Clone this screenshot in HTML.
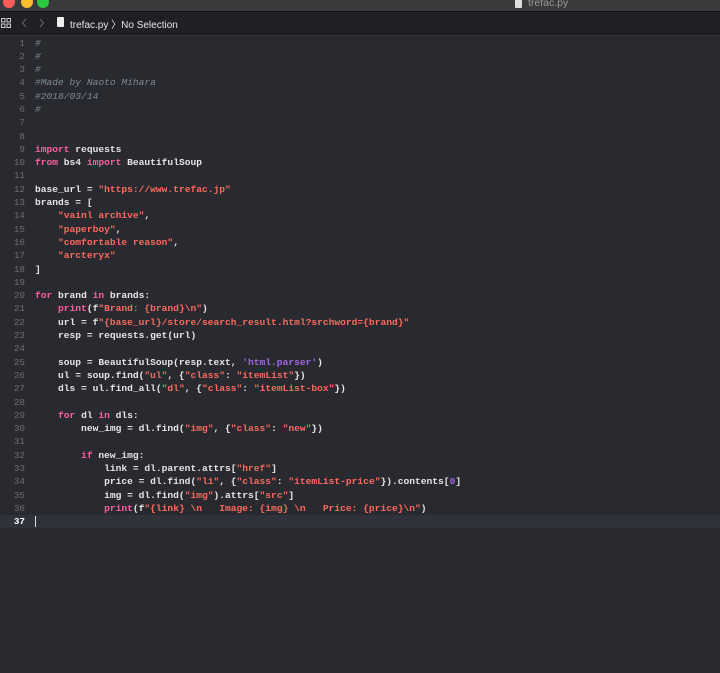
<!DOCTYPE html>
<html><head><meta charset="utf-8"><style>
*{margin:0;padding:0;box-sizing:border-box}
body{width:720px;height:673px;background:#292a30;overflow:hidden;position:relative;font-family:"Liberation Sans",sans-serif}
#title{position:absolute;left:0;top:0;width:720px;height:12px;background:#3a3a3c;border-bottom:1px solid #111}
.tl{position:absolute;top:-4px;width:12px;height:12px;border-radius:50%}
#jump{position:absolute;left:0;top:12px;width:720px;height:22px;background:#1f2023;border-bottom:1px solid #141416;color:#e6e6e6;font-size:9.5px}
#code{position:absolute;left:0;top:36.5px;width:720px;font-family:"Liberation Mono",monospace;font-size:9.6px;color:#e6e6e8;font-weight:bold}
.l{height:13.3px;line-height:13.3px;white-space:pre;position:relative}
.n{position:absolute;left:0;width:25px;text-align:right;color:#6e6e73;font-size:9.3px;font-weight:normal}
.c{position:absolute;left:35px}
.k{color:#fc5fa3}.s{color:#fc6a5d}.m{color:#7d8a97;font-style:italic;font-weight:normal}.p{color:#a167e6}
.cur{background:#2f323a}
.cur .n{color:#fff;font-weight:bold}
</style></head><body>
<div id="title">
<div class="tl" style="left:3px;background:#fc5f57"></div>
<div class="tl" style="left:21px;background:#fdbc2e"></div>
<div class="tl" style="left:37px;background:#28c840"></div>
<div style="position:absolute;left:515px;top:-1px;width:7px;height:9px;background:#ddd;border-radius:1px"></div>
<div style="position:absolute;left:528px;top:-3px;color:#9a9a9c;font-size:10.5px">trefac.py</div>
</div>
<div id="jump">
<svg style="position:absolute;left:1px;top:6px" width="10" height="10" viewBox="0 0 10 10" fill="none" stroke="#ccc" stroke-width="1"><rect x="0.5" y="0.5" width="3.5" height="3.5"/><rect x="6" y="0.5" width="3.5" height="3.5"/><rect x="0.5" y="6" width="3.5" height="3.5"/><rect x="6" y="6" width="3.5" height="3.5"/></svg>
<svg style="position:absolute;left:21px;top:6px" width="30" height="10" viewBox="0 0 30 10" fill="none" stroke="#666" stroke-width="1"><path d="M5 1L1.5 5L5 9"/><path d="M19 1L22.5 5L19 9"/></svg>
<div style="position:absolute;left:57px;top:5px;width:7px;height:10px;background:#eee;border-radius:1px"></div>
<div style="position:absolute;left:70px;top:4px;font-size:10px">trefac.py 〉No Selection</div>
</div>
<div id="code">
<div class="l"><span class="n">1</span><span class="c m">#</span></div>
<div class="l"><span class="n">2</span><span class="c m">#</span></div>
<div class="l"><span class="n">3</span><span class="c m">#</span></div>
<div class="l"><span class="n">4</span><span class="c m">#Made by Naoto Mihara</span></div>
<div class="l"><span class="n">5</span><span class="c m">#2018/03/14</span></div>
<div class="l"><span class="n">6</span><span class="c m">#</span></div>
<div class="l"><span class="n">7</span><span class="c"></span></div>
<div class="l"><span class="n">8</span><span class="c"></span></div>
<div class="l"><span class="n">9</span><span class="c"><span class="k">import</span> requests</span></div>
<div class="l"><span class="n">10</span><span class="c"><span class="k">from</span> bs4 <span class="k">import</span> BeautifulSoup</span></div>
<div class="l"><span class="n">11</span><span class="c"></span></div>
<div class="l"><span class="n">12</span><span class="c">base_url = <span class="s">"https://www.trefac.jp"</span></span></div>
<div class="l"><span class="n">13</span><span class="c">brands = [</span></div>
<div class="l"><span class="n">14</span><span class="c">    <span class="s">"vainl archive"</span>,</span></div>
<div class="l"><span class="n">15</span><span class="c">    <span class="s">"paperboy"</span>,</span></div>
<div class="l"><span class="n">16</span><span class="c">    <span class="s">"comfortable reason"</span>,</span></div>
<div class="l"><span class="n">17</span><span class="c">    <span class="s">"arcteryx"</span></span></div>
<div class="l"><span class="n">18</span><span class="c">]</span></div>
<div class="l"><span class="n">19</span><span class="c"></span></div>
<div class="l"><span class="n">20</span><span class="c"><span class="k">for</span> brand <span class="k">in</span> brands:</span></div>
<div class="l"><span class="n">21</span><span class="c">    <span class="k">print</span>(f<span class="s">"Brand: {brand}\n"</span>)</span></div>
<div class="l"><span class="n">22</span><span class="c">    url = f<span class="s">"{base_url}/store/search_result.html?srchword={brand}"</span></span></div>
<div class="l"><span class="n">23</span><span class="c">    resp = requests.get(url)</span></div>
<div class="l"><span class="n">24</span><span class="c"></span></div>
<div class="l"><span class="n">25</span><span class="c">    soup = BeautifulSoup(resp.text, <span class="p">'html.parser'</span>)</span></div>
<div class="l"><span class="n">26</span><span class="c">    ul = soup.find(<span class="s">"ul"</span>, {<span class="s">"class"</span>: <span class="s">"itemList"</span>})</span></div>
<div class="l"><span class="n">27</span><span class="c">    dls = ul.find_all(<span class="s">"dl"</span>, {<span class="s">"class"</span>: <span class="s">"itemList-box"</span>})</span></div>
<div class="l"><span class="n">28</span><span class="c"></span></div>
<div class="l"><span class="n">29</span><span class="c">    <span class="k">for</span> dl <span class="k">in</span> dls:</span></div>
<div class="l"><span class="n">30</span><span class="c">        new_img = dl.find(<span class="s">"img"</span>, {<span class="s">"class"</span>: <span class="s">"new"</span>})</span></div>
<div class="l"><span class="n">31</span><span class="c"></span></div>
<div class="l"><span class="n">32</span><span class="c">        <span class="k">if</span> new_img:</span></div>
<div class="l"><span class="n">33</span><span class="c">            link = dl.parent.attrs[<span class="s">"href"</span>]</span></div>
<div class="l"><span class="n">34</span><span class="c">            price = dl.find(<span class="s">"li"</span>, {<span class="s">"class"</span>: <span class="s">"itemList-price"</span>}).contents[<span class="p">0</span>]</span></div>
<div class="l"><span class="n">35</span><span class="c">            img = dl.find(<span class="s">"img"</span>).attrs[<span class="s">"src"</span>]</span></div>
<div class="l"><span class="n">36</span><span class="c">            <span class="k">print</span>(f<span class="s">"{link} \n   Image: {img} \n   Price: {price}\n"</span>)</span></div>
<div class="l cur"><span class="n">37</span><span class="c" style="border-left:1px solid #ddd;height:11px;top:1px"></span></div>
</div>
</body></html>
